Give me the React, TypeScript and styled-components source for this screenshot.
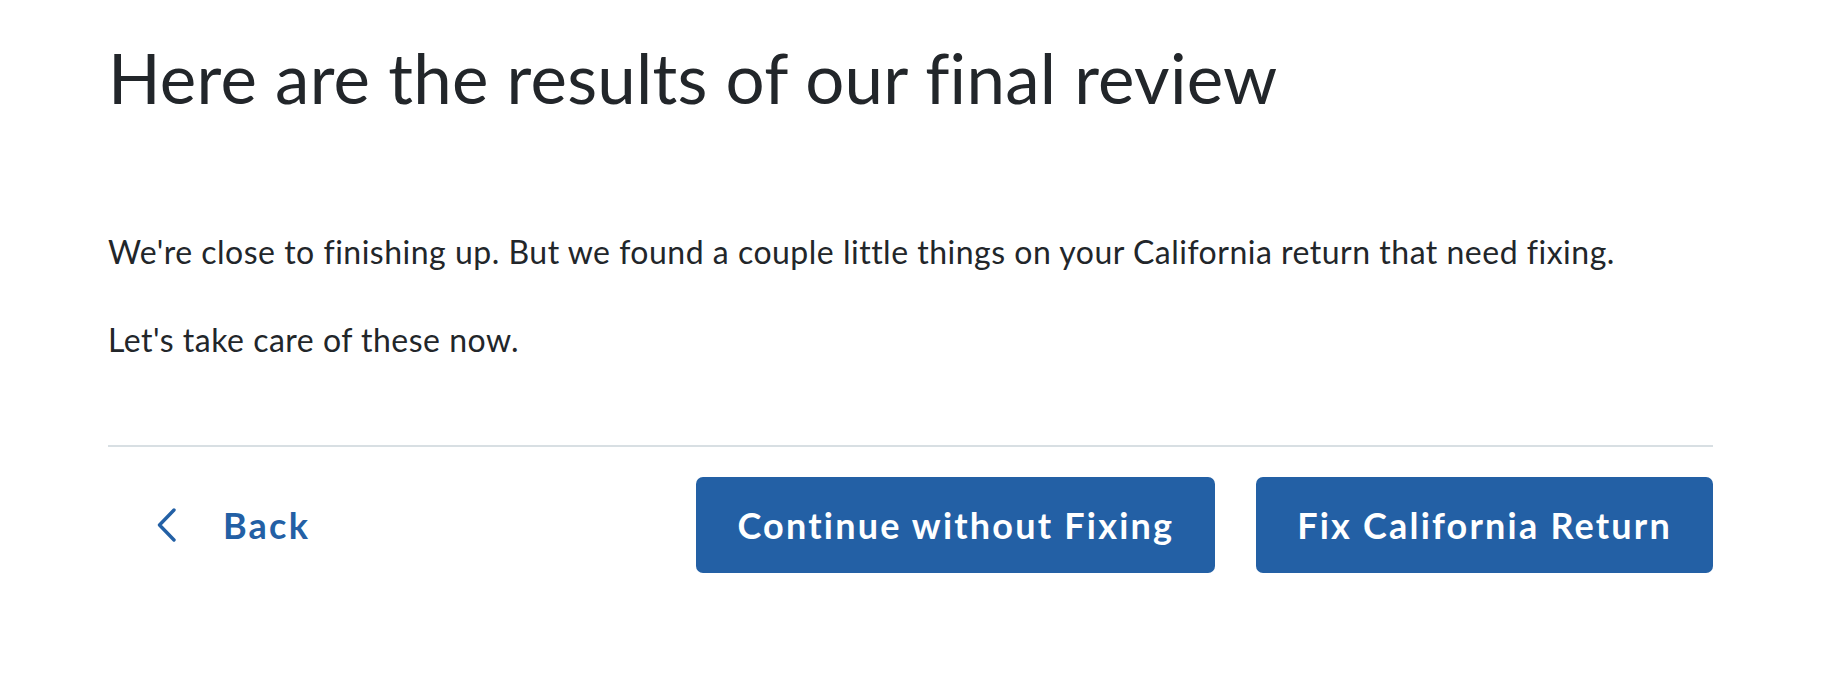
import styled, { createGlobalStyle } from 'styled-components';

const GlobalStyle = createGlobalStyle`
	body {
		margin: 0;
		background: #ffffff;
		font-family: Lato, 'Noto Sans', sans-serif;
		color: #22262a;
	}
`;

const ChevronLeft = () => (
	<svg width="20" height="34" viewBox="0 0 20 34" fill="none">
		<path d="M17 2 L2.5 17 L17 32" stroke="#2360a5" strokeWidth="3.4" strokeLinecap="round" strokeLinejoin="round" />
	</svg>
);

const App = () => {
	return (
		<>
			<GlobalStyle />
			<Page>
				<Title>Here are the results of our final review</Title>
				<Body>
					<Paragraph>
						We're close to finishing up. But we found a couple little things on your California return
						that need fixing.
					</Paragraph>
					<Paragraph>Let's take care of these now.</Paragraph>
				</Body>
				<Footer>
					<BackButton>
						<ChevronLeft />
						<span>Back</span>
					</BackButton>
					<Actions>
						<PrimaryBtn>Continue without Fixing</PrimaryBtn>
						<PrimaryBtn>Fix California Return</PrimaryBtn>
					</Actions>
				</Footer>
			</Page>
		</>
	);
};
export default App;

const Page = styled.div`
	width: 1605px;
	padding: 37px 0 0 108px;
`;

const Title = styled.h1`
	margin: 0;
	font-size: 69px;
	font-weight: 400;
	line-height: 1.2;
	letter-spacing: 0.25px;
	color: #22262a;
`;

const Body = styled.div`
	padding-top: 113px;
	display: flex;
	flex-direction: column;
	gap: 50px;
`;

const Paragraph = styled.p`
	margin: 0;
	font-size: 32px;
	line-height: 1.2;
	letter-spacing: 0.5px;
	color: #22262a;
`;

const Footer = styled.div`
	margin-top: 85px;
	border-top: 2px solid #d8dfe3;
	padding-top: 30px;
	display: flex;
	align-items: center;
	justify-content: space-between;
`;

const BackButton = styled.button`
	display: flex;
	align-items: center;
	gap: 46px;
	padding: 0 0 0 49px;
	background: none;
	border: none;
	font-family: Lato, 'Noto Sans', sans-serif;
	font-size: 36px;
	font-weight: 700;
	letter-spacing: 2.2px;
	color: #2360a5;
	cursor: pointer;
`;

const Actions = styled.div`
	display: flex;
	gap: 41px;
`;

const PrimaryBtn = styled.button`
	height: 96px;
	padding: 0 41px;
	background: #2360a5;
	border: none;
	border-radius: 7px;
	font-family: Lato, 'Noto Sans', sans-serif;
	font-size: 36px;
	font-weight: 700;
	letter-spacing: 2.2px;
	color: #ffffff;
	cursor: pointer;
`;
